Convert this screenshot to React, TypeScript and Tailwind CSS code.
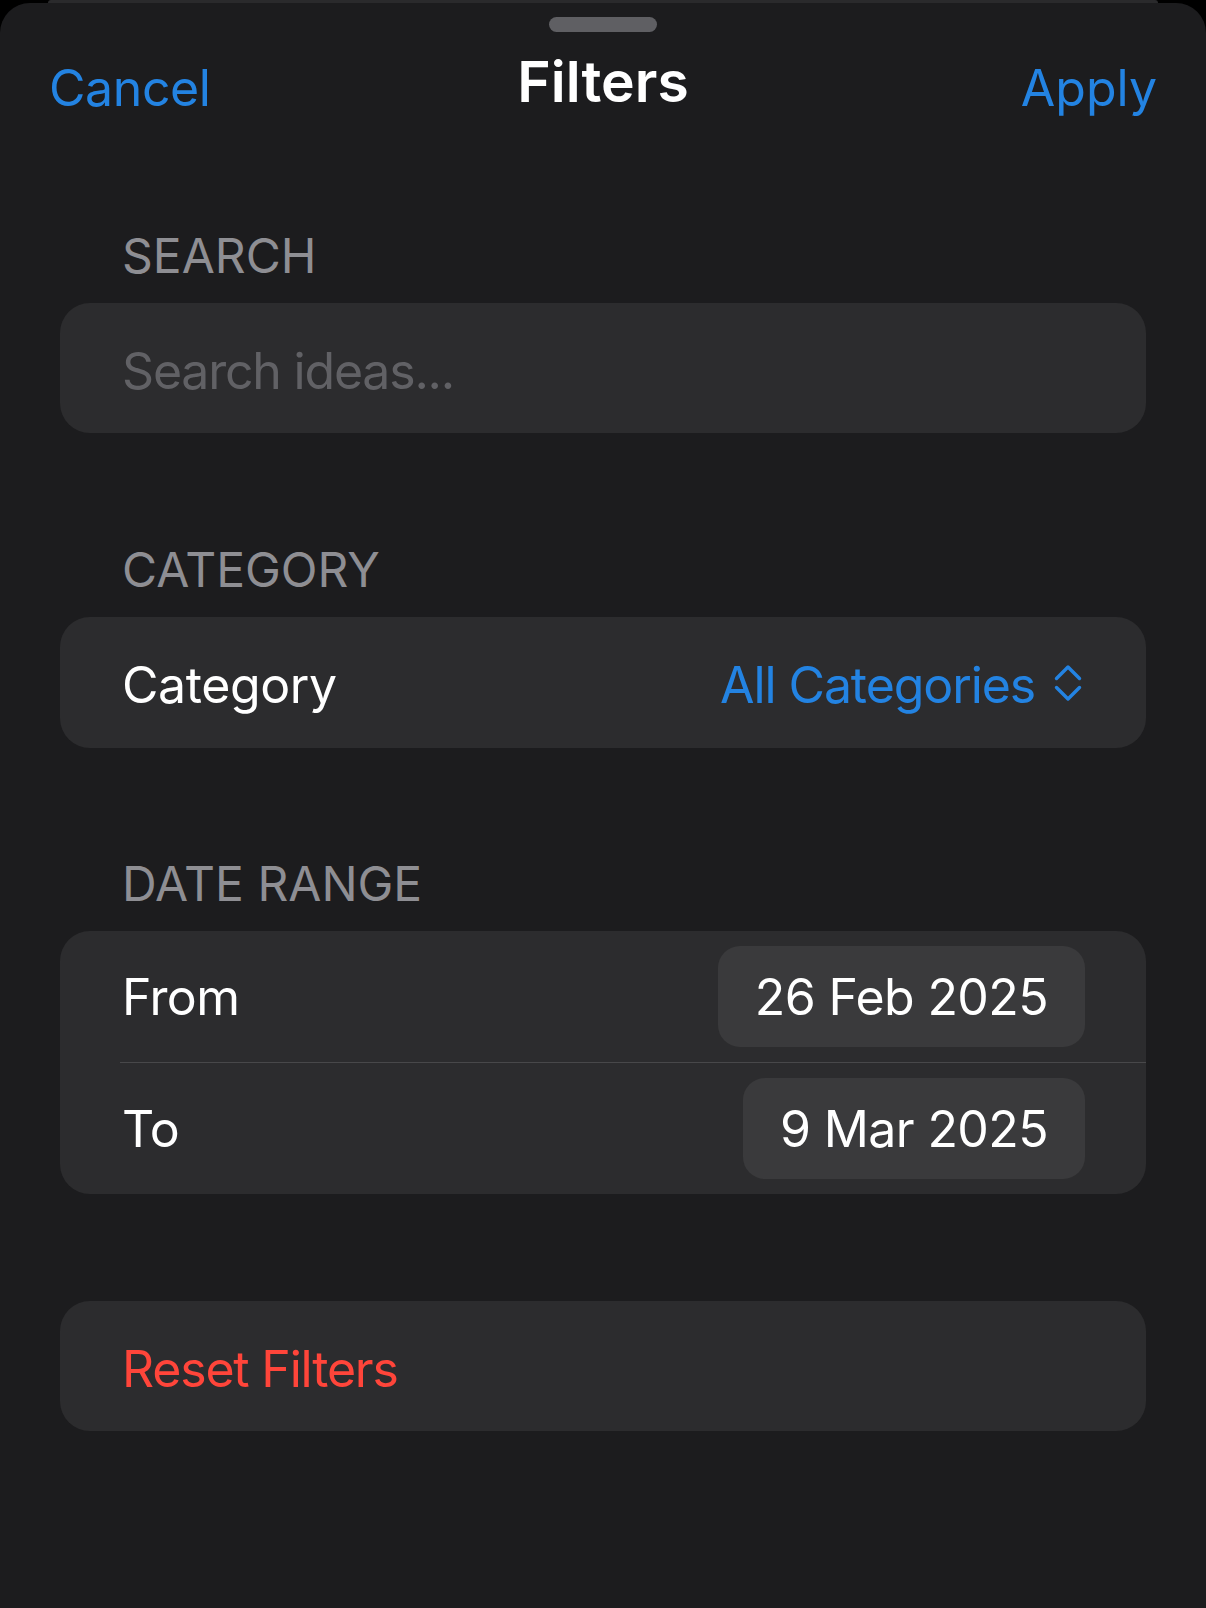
import type { ReactNode } from "react";

const FONT = "font-['Inter','Noto_Sans',sans-serif]";

function SectionLabel({ children }: { children: ReactNode }) {
  return (
    <p className="mb-[23px] px-[122px] text-[48px] leading-none text-[#8e8e93]">
      {children}
    </p>
  );
}

function Card({ children }: { children: ReactNode }) {
  return (
    <div className="mx-[60px] overflow-hidden rounded-[30px] bg-[#2c2c2e]">
      {children}
    </div>
  );
}

function UpDown() {
  return (
    <svg width="28" height="38" viewBox="0 0 28 38" fill="none" className="ml-[19px]">
      <path
        d="M2.5 14.5 14 3 25.5 14.5M2.5 23.5 14 35 25.5 23.5"
        stroke="#2383e2"
        strokeWidth="3.4"
        strokeLinecap="round"
        strokeLinejoin="round"
      />
    </svg>
  );
}

function DateRow({ label, value }: { label: string; value: string }) {
  return (
    <div className="flex h-[131px] items-center justify-between pl-[62px] pr-[61px]">
      <span className="text-[50px] leading-none tracking-[-0.6px] text-white">{label}</span>
      <span className="flex h-[101px] items-center rounded-[22px] bg-[#3a3a3c] px-[37px] text-[50px] leading-none tracking-[-0.6px] text-white">
        {value}
      </span>
    </div>
  );
}

export default function App() {
  return (
    <div className={`${FONT} flex h-[1608px] w-[1206px] flex-col bg-black`}>
      <div className="mx-[48px] h-[3px] shrink-0 rounded-t-[6px] bg-[#2a2a2c]" />
      <div className="flex flex-1 flex-col rounded-t-[30px] bg-[#1c1c1e]">
        <div className="mx-auto mt-[14px] h-[15px] w-[108px] rounded-full bg-[#5f5f63]" />

        <div className="mt-[21px] grid grid-cols-3 items-start px-[49px]">
          <button type="button" className="mt-[10px] justify-self-start text-[50px] leading-none tracking-[-0.4px] text-[#2383e2]">
            Cancel
          </button>
          <h1 className="justify-self-center text-[57px] font-semibold leading-none text-white">
            Filters
          </h1>
          <button type="button" className="mt-[10px] justify-self-end text-[50px] leading-none text-[#2383e2]">
            Apply
          </button>
        </div>

        <div className="mt-[119px]">
          <SectionLabel>SEARCH</SectionLabel>
          <Card>
            <div className="flex h-[130px] items-center px-[62px] pt-[6px]">
              <span className="text-[50px] leading-none tracking-[-1.2px] text-[#616165]">Search ideas...</span>
            </div>
          </Card>
        </div>

        <div className="mt-[113px]">
          <SectionLabel>CATEGORY</SectionLabel>
          <Card>
            <div className="flex h-[131px] items-center justify-between pl-[62px] pr-[64px]">
              <span className="pt-[4px] text-[50px] leading-none tracking-[-0.4px] text-white">Category</span>
              <span className="flex items-center">
                <span className="pt-[4px] text-[50px] leading-none tracking-[-1.1px] text-[#2383e2]">All Categories</span>
                <UpDown />
              </span>
            </div>
          </Card>
        </div>

        <div className="mt-[112px]">
          <SectionLabel>DATE RANGE</SectionLabel>
          <Card>
            <DateRow label="From" value="26 Feb 2025" />
            <div className="ml-[60px] h-px bg-[#48484a]" />
            <DateRow label="To" value="9 Mar 2025" />
          </Card>
        </div>

        <div className="mt-[107px]">
          <Card>
            <div className="flex h-[130px] items-center px-[62px] pt-[6px]">
              <span className="text-[50px] leading-none tracking-[-1.2px] text-[#ff453a]">Reset Filters</span>
            </div>
          </Card>
        </div>
      </div>
    </div>
  );
}
